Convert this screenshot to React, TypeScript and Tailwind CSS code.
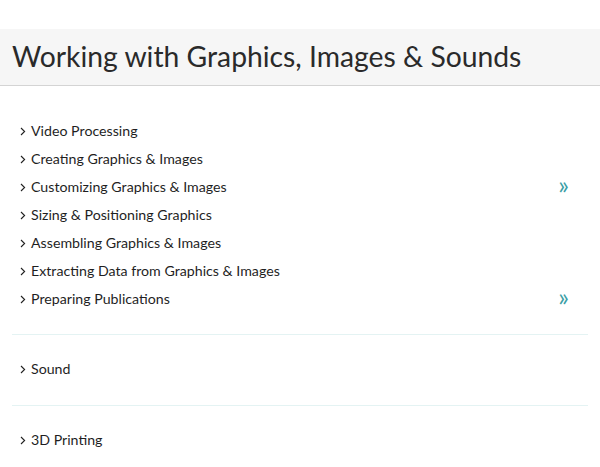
import React from "react";

const Chevron = () => (
  <svg width="6" height="9" viewBox="0 0 6 9" className="shrink-0" fill="none">
    <path d="M1 1 L4.6 4.5 L1 8" stroke="#222" strokeWidth="1.1" />
  </svg>
);

const Row = ({ label, more }: { label: string; more?: boolean }) => (
  <div className="flex h-[28px] items-center pl-[8px] pr-[19px]">
    <Chevron />
    <span className="ml-[5px] text-[14.2px] text-[#1f1f1f]">{label}</span>
    {more && (
      <span className="ml-auto text-[25px] leading-none text-[#3b9ea6] -mt-[6px]">»</span>
    )}
  </div>
);

export default function App() {
  const items: [string, boolean][] = [
    ["Video Processing", false],
    ["Creating Graphics & Images", false],
    ["Customizing Graphics & Images", true],
    ["Sizing & Positioning Graphics", false],
    ["Assembling Graphics & Images", false],
    ["Extracting Data from Graphics & Images", false],
    ["Preparing Publications", true],
  ];
  return (
    <div
      className="w-[600px] h-[467px] overflow-hidden bg-white pt-[29px]"
      style={{ fontFamily: "Lato, 'Noto Sans', sans-serif" }}
    >
      <div className="h-[57px] bg-[#f6f6f6] border-b border-[#d4d4d4] flex items-center pl-[12px]">
        <h1 className="text-[28.3px] text-[#2a2a2a] leading-none -mt-[2px]">
          Working with Graphics, Images &amp; Sounds
        </h1>
      </div>
      <div className="mx-[12px] mt-[31px]">
        <div className="pb-[21px] border-b border-[#e4f3f3]">
          {items.map(([l, m]) => (
            <Row key={l} label={l} more={m} />
          ))}
        </div>
        <div className="pt-[20px] pb-[22px] border-b border-[#e4f3f3]">
          <Row label="Sound" />
        </div>
        <div className="pt-[20px]">
          <Row label="3D Printing" />
        </div>
      </div>
    </div>
  );
}
